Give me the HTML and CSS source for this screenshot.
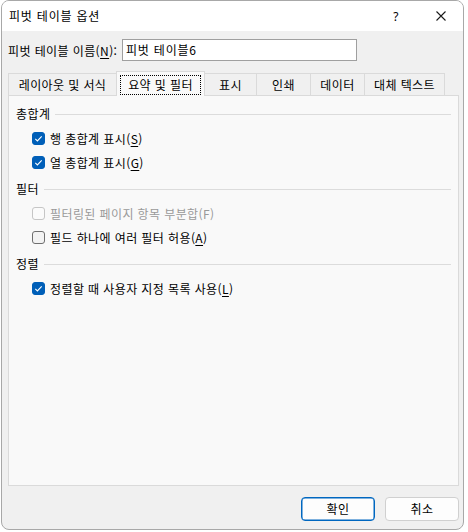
FILE: index.html
```html
<!DOCTYPE html>
<html lang="ko">
<head>
<meta charset="utf-8">
<title>피벗 테이블 옵션</title>
<link rel="stylesheet" href="styles.css">
</head>
<body>
<div class="dialog">
  <div class="titlebar">
    <span class="title">피벗 테이블 옵션</span>
    <span class="help">?</span>
    <span class="close">
      <svg width="10" height="10" viewBox="0 0 10 10"><path d="M0.5 0.5L9.5 9.5M9.5 0.5L0.5 9.5" stroke="#1a1a1a" stroke-width="1.1" fill="none"/></svg>
    </span>
  </div>
  <div class="content">
    <div class="namerow">
      <label class="namelabel">피벗 테이블 이름(<u>N</u>):</label>
      <div class="input">피벗 테이블6</div>
    </div>
    <div class="tabs">
      <div class="tab w1">레이아웃 및 서식</div>
      <div class="tab active w2"><span class="focus">요약 및 필터</span></div>
      <div class="tab w3">표시</div>
      <div class="tab w4">인쇄</div>
      <div class="tab w5">데이터</div>
      <div class="tab w6">대체 텍스트</div>
    </div>
    <div class="panel">
      <div class="section">
        <div class="sechead"><span>총합계</span><i class="rule"></i></div>
        <div class="row"><span class="cb checked"><svg viewBox="0 0 13 13" width="13" height="13"><path d="M3.3 6.8L5.4 8.9L9.7 4.4" stroke="#fff" stroke-width="1.1" fill="none"/></svg></span>행 총합계 표시(<u>S</u>)</div>
        <div class="row"><span class="cb checked"><svg viewBox="0 0 13 13" width="13" height="13"><path d="M3.3 6.8L5.4 8.9L9.7 4.4" stroke="#fff" stroke-width="1.1" fill="none"/></svg></span>열 총합계 표시(<u>G</u>)</div>
      </div>
      <div class="section">
        <div class="sechead"><span>필터</span><i class="rule"></i></div>
        <div class="row disabled"><span class="cb"></span>필터링된 페이지 항목 부분합(F)</div>
        <div class="row"><span class="cb"></span>필드 하나에 여러 필터 허용(<u>A</u>)</div>
      </div>
      <div class="section">
        <div class="sechead"><span>정렬</span><i class="rule"></i></div>
        <div class="row"><span class="cb checked"><svg viewBox="0 0 13 13" width="13" height="13"><path d="M3.3 6.8L5.4 8.9L9.7 4.4" stroke="#fff" stroke-width="1.1" fill="none"/></svg></span>정렬할 때 사용자 지정 목록 사용(<u>L</u>)</div>
      </div>
    </div>
    <div class="buttons">
      <button class="btn default">확인</button>
      <button class="btn">취소</button>
    </div>
  </div>
</div>
</body>
</html>
```
FILE: styles.css
```css
* { box-sizing: border-box; }
html, body {
  margin: 0;
  padding: 0;
  background: #ffffff;
}
body {
  width: 468px;
  height: 532px;
  overflow: hidden;
  font-family: "Noto Sans CJK KR", "Noto Sans", sans-serif;
  font-size: 12px;
  letter-spacing: 0.4px;
  color: #000;
}
.dialog {
  margin-left: 1px;
  width: 463px;
  height: 530px;
  border: 1px solid #a8a8a8;
  border-radius: 8px;
  overflow: hidden;
  background: #f0f0f0;
  display: flex;
  flex-direction: column;
}
.titlebar {
  height: 30px;
  background: #ffffff;
  display: flex;
  align-items: center;
  padding-left: 7px;
  flex: none;
}
.title {
  font-size: 12px;
  letter-spacing: 0.8px;
  flex: 1;
  line-height: 16px;
}
.help {
  font-size: 12px;
  width: 14px;
  text-align: center;
  margin-right: 33px;
  font-family: "Noto Sans", sans-serif;
}
.close {
  width: 10px;
  height: 10px;
  display: flex;
  margin-right: 17px;
}
.content {
  flex: 1;
  padding: 8px 0 0 6px;
  display: flex;
  flex-direction: column;
}
.namerow {
  display: flex;
  align-items: center;
  height: 22px;
}
.namelabel {
  width: 114px;
  white-space: nowrap;
}
.input {
  width: 235px;
  height: 22px;
  background: #fff;
  border: 1px solid #9f9f9f;
  padding-left: 3px;
  line-height: 19px;
  letter-spacing: 0.8px;
}
.tabs {
  display: flex;
  margin-top: 10px;
  height: 24px;
  align-items: flex-end;
  position: relative;
  z-index: 1;
}
.tab {
  height: 22px;
  border: 1px solid #dadada;
  border-bottom: none;
  margin-left: -1px;
  background: #f0f0f0;
  display: flex;
  align-items: center;
  justify-content: center;
  white-space: nowrap;
  line-height: 16px;
}
.tab.w1 { width: 109px; margin-left: 0; }
.tab.w2 { width: 89px; }
.tab.w3 { width: 53px; }
.tab.w4 { width: 55px; }
.tab.w5 { width: 55px; }
.tab.w6 { width: 81px; }
.tab.active {
  background: #f9f9f9;
  margin-bottom: -1px;
  height: 25px;
  border-color: #dadada;
  position: relative;
  z-index: 2;
}
.focus {
  display: block;
  border: 1px dotted #000;
  padding: 1px 2px;
  width: 81px;
  height: 20px;
  text-align: center;
  line-height: 16px;
  margin-top: 1px;
}
.panel {
  width: 451px;
  height: 391px;
  background: #f9f9f9;
  border: 1px solid #dadada;
  padding: 5px 7px 0 7px;
  display: flex;
  flex-direction: column;
  gap: 2px;
}
.section {
  display: flex;
  flex-direction: column;
}
.sechead {
  height: 25px;
  display: flex;
  align-items: center;
  gap: 5px;
}
.rule {
  flex: 1;
  height: 1px;
  background: #dcdcdc;
  margin-top: 1px;
}
.row {
  height: 24px;
  display: flex;
  align-items: center;
  padding-left: 16px;
}
.row.disabled { color: #9a9a9a; }
.cb {
  width: 13px;
  height: 13px;
  border: 1px solid #6f6f6f;
  border-radius: 3px;
  background: #f3f3f3;
  margin-right: 5px;
  flex: none;
  display: flex;
  margin-top: 1px;
}
.cb svg { margin: -1px; }
.cb.checked {
  background: #005fb8;
  border-color: #005fb8;
}
.row.disabled .cb {
  border-color: #c6c6c6;
  background: #fbfbfb;
}
u { text-decoration-thickness: 1px; text-underline-offset: 2px; }
.buttons {
  display: flex;
  justify-content: flex-end;
  gap: 10px;
  width: 451px;
  margin-top: 11px;
}
.btn {
  width: 74px;
  height: 24px;
  font-family: "Noto Sans CJK KR", "Noto Sans", sans-serif;
  font-size: 12px;
  letter-spacing: 0.4px;
  background: #fdfdfd;
  border: 1px solid #d0d0d0;
  border-radius: 4px;
  padding: 0;
  color: #000;
  line-height: 16px;
}
.btn.default {
  border: 1px solid #0067c0;
  box-shadow: inset 0 0 0 0.5px #0067c0;
}
```
